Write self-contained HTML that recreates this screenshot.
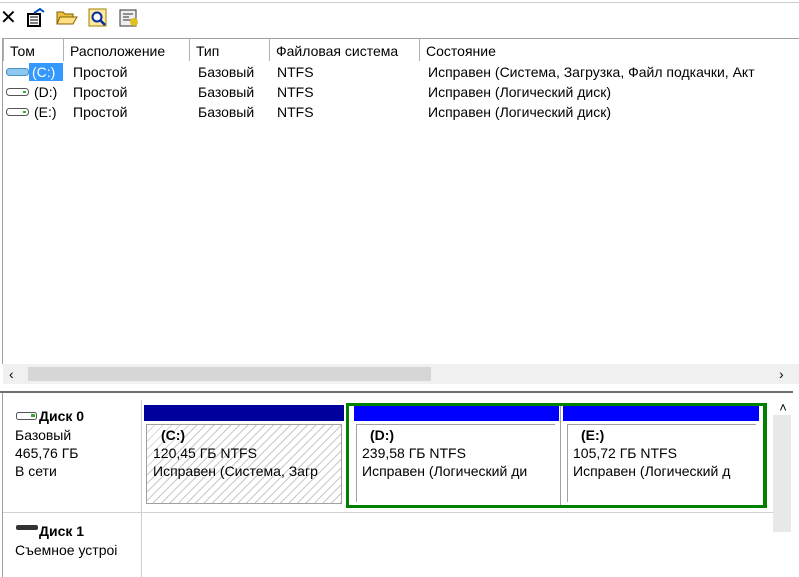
<!DOCTYPE html>
<html><head><meta charset="utf-8"><style>
body{margin:0;width:799px;height:577px;overflow:hidden;background:#fff;font-family:"Liberation Sans","DejaVu Sans",sans-serif;font-size:14px;color:#000;position:relative}
.a{position:absolute;white-space:nowrap}
.hd{position:absolute;top:38px;height:23px;border-left:1px solid #b0b0b0;padding-left:6px;line-height:26px;box-sizing:border-box}
.hatch{background:repeating-linear-gradient(135deg,#fff 0 5px,#c8c8c8 5px 6px)}
</style></head><body>
<div class="a" style="left:0;top:2px;width:799px;height:1px;background:#ccc"></div>
<div class="a" style="left:0;top:6px;font-size:20px;line-height:24px">✕</div>
<svg class="a" style="left:26px;top:8px" width="20" height="20"><rect x="2" y="6" width="12" height="12" fill="#fff" stroke="#000" stroke-width="2"/><path d="M4 9h8M4 12h8M4 15h8" stroke="#000"/><path d="M8 5l6-4 4 3" stroke="#0050c0" stroke-width="2" fill="none"/></svg>
<svg class="a" style="left:56px;top:8px" width="22" height="18"><path d="M1 4h6l2 2h8v10H1z" fill="#f0c040" stroke="#806000"/><path d="M4 9h17l-4 7H1z" fill="#ffe080" stroke="#806000"/></svg>
<svg class="a" style="left:88px;top:8px" width="20" height="20"><rect x="1" y="1" width="17" height="17" fill="#ffe9a0" stroke="#a08000"/><circle cx="9" cy="9" r="4.5" fill="#fff" stroke="#0030a0" stroke-width="2"/><path d="M12 12l5 5" stroke="#0030a0" stroke-width="2.5"/></svg>
<svg class="a" style="left:119px;top:8px" width="22" height="20"><rect x="1" y="2" width="16" height="16" fill="#eee" stroke="#333"/><path d="M4 6h10M4 9h6M4 12h8" stroke="#333"/><circle cx="15" cy="14" r="4" fill="#e0c020"/></svg>
<div class="a" style="left:2px;top:38px;width:797px;height:1px;background:#a0a0a0"></div>
<div class="a" style="left:2px;top:38px;width:1px;height:326px;background:#a0a0a0"></div>
<div class="hd" style="left:3px;width:60px">Том</div>
<div class="hd" style="left:63px;width:124px">Расположение</div>
<div class="hd" style="left:189px;width:80px">Тип</div>
<div class="hd" style="left:269px;width:150px">Файловая система</div>
<div class="hd" style="left:419px;width:380px">Состояние</div>
<svg class="a" style="left:6px;top:67px" width="26" height="10"><rect x="0.5" y="1.5" width="22" height="7" rx="3" fill="#8cc8f0" stroke="#4a90c0"/></svg>
<div class="a" style="left:29px;top:63px;width:34px;height:18px;background:#3399ff;color:#fff;line-height:18px;padding-left:3px;box-sizing:border-box">(C:)</div>
<svg class="a" style="left:6px;top:87px" width="26" height="10"><rect x="0.5" y="1.5" width="22" height="7" rx="3" fill="#fff" stroke="#555"/><rect x="17" y="4" width="3" height="2" fill="#3a3"/></svg>
<svg class="a" style="left:6px;top:107px" width="26" height="10"><rect x="0.5" y="1.5" width="22" height="7" rx="3" fill="#fff" stroke="#555"/><rect x="17" y="4" width="3" height="2" fill="#3a3"/></svg>
<div class="a" style="left:34px;top:83px;line-height:18px">(D:)</div>
<div class="a" style="left:34px;top:103px;line-height:18px">(E:)</div>
<div class="a" style="left:73px;top:62px;line-height:20px">Простой<br>Простой<br>Простой</div>
<div class="a" style="left:198px;top:62px;line-height:20px">Базовый<br>Базовый<br>Базовый</div>
<div class="a" style="left:277px;top:62px;line-height:20px">NTFS<br>NTFS<br>NTFS</div>
<div class="a" style="left:428px;top:62px;line-height:20px">Исправен (Система, Загрузка, Файл подкачки, Акт<br>Исправен (Логический диск)<br>Исправен (Логический диск)</div>
<div class="a" style="left:3px;top:364px;width:796px;height:20px;background:#f0f0f0"></div>
<div class="a" style="left:28px;top:367px;width:403px;height:14px;background:#d6d6d6"></div>
<div class="a" style="left:9px;top:364px;line-height:20px;font-size:14px">‹</div>
<div class="a" style="left:779px;top:364px;line-height:20px;font-size:14px">›</div>
<div class="a" style="left:0;top:391px;width:793px;height:2px;background:#707070"></div>
<div class="a" style="left:2px;top:393px;width:1px;height:184px;background:#a0a0a0"></div>
<div class="a" style="left:141px;top:400px;width:1px;height:177px;background:#d0d0d0"></div>
<div class="a" style="left:3px;top:512px;width:770px;height:1px;background:#d0d0d0"></div>
<svg class="a" style="left:16px;top:412px" width="24" height="9"><rect x="0.5" y="0.5" width="20" height="7" rx="2" fill="#fff" stroke="#555"/><rect x="15" y="2" width="4" height="3" fill="#3a3"/></svg>
<div class="a" style="left:39px;top:407px;font-weight:bold;line-height:18px">Диск 0</div>
<div class="a" style="left:15px;top:426px;line-height:18px">Базовый<br>465,76 ГБ<br>В сети</div>
<svg class="a" style="left:16px;top:524px" width="24" height="8"><rect x="0" y="1" width="22" height="5" rx="2" fill="#333"/></svg>
<div class="a" style="left:39px;top:522px;font-weight:bold;line-height:18px">Диск 1</div>
<div class="a" style="left:15px;top:541px;line-height:18px">Съемное устро<span style="letter-spacing:-3px">і</span></div>
<div class="a" style="left:144px;top:405px;width:200px;height:16px;background:#00009c"></div>
<div class="a hatch" style="left:146px;top:424px;width:194px;height:78px;border:1px solid #a0a0a0"></div>
<div class="a" style="left:153px;top:426px;line-height:18px"><b style="margin-left:8px">(C:)</b><br>120,45 ГБ NTFS<br>Исправен (Система, Загр</div>
<div class="a" style="left:346px;top:403px;width:421px;height:105px;border:3px solid #008000;border-right-width:4px;box-sizing:border-box"></div>
<div class="a" style="left:354px;top:406px;width:205px;height:15px;background:#0000ff"></div>
<div class="a" style="left:563px;top:406px;width:196px;height:15px;background:#0000ff"></div>
<div class="a" style="left:356px;top:424px;width:198px;height:77px;border-left:1px solid #a0a0a0;border-top:1px solid #a0a0a0"></div>
<div class="a" style="left:560px;top:406px;width:1px;height:99px;background:#a0a0a0"></div>
<div class="a" style="left:567px;top:424px;width:188px;height:77px;border-left:1px solid #a0a0a0;border-top:1px solid #a0a0a0"></div>
<div class="a" style="left:362px;top:426px;line-height:18px"><b style="margin-left:8px">(D:)</b><br>239,58 ГБ NTFS<br>Исправен (Логический ди</div>
<div class="a" style="left:573px;top:426px;line-height:18px"><b style="margin-left:8px">(E:)</b><br>105,72 ГБ NTFS<br>Исправен (Логический <span style="letter-spacing:-4px">д</span></div>
<div class="a" style="left:775px;top:400px;width:16px;line-height:16px;font-size:13px;text-align:center">˄</div>
<div class="a" style="left:773px;top:415px;width:18px;height:117px;background:#e8e8e8"></div>
</body></html>
